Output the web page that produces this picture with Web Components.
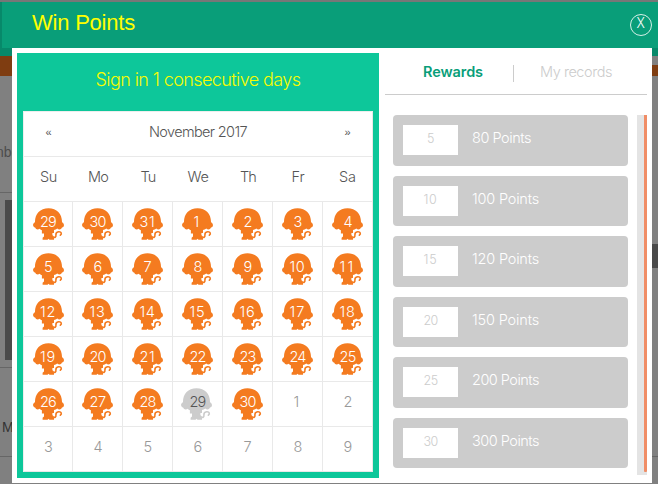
<!DOCTYPE html>
<html lang="en"><head><meta charset="utf-8"><title>Win Points</title>
<style>html,body{margin:0;height:484px;overflow:hidden;background:#808080}body{position:relative;font-family:Inter,"Liberation Sans",sans-serif;font-weight:300}</style></head>
<body><page-backdrop></page-backdrop><points-dialog></points-dialog>
<script>
const define=(name,html,setup)=>customElements.define(name,class extends HTMLElement{
  connectedCallback(){if(this.shadowRoot)return;
    this.attachShadow({mode:'open'}).innerHTML=typeof html==='function'?html(this):html;
    if(setup)setup(this);}
});

// Text whose tracking is tuned so that it spans the width attribute.
define('fit-text',`<style>:host{display:inline-block;white-space:nowrap}</style><span><slot></slot></span>`,el=>{
  const n=el.textContent.length,w=el.shadowRoot.querySelector('span').getBoundingClientRect().width;
  const s=(+el.getAttribute('width')-w)/n;
  el.style.letterSpacing=s.toFixed(3)+'px';
});

define('page-backdrop',`<style>
:host{position:absolute;inset:0;overflow:hidden;background:#808080;font:14px "Liberation Sans",sans-serif;color:#4d4d4d}
i{position:absolute;display:block}span{position:absolute;line-height:16px}
.l{left:0;width:658px;height:1px;background:#666}
</style>
<i style="left:0;top:0;width:658px;height:2px;background:#777"></i>
<i style="left:0;top:2px;width:658px;height:54px;background:#07896a"></i>
<i style="left:0;top:56px;width:12px;height:20px;background:#7f3d11"></i>
<i style="left:652px;top:56px;width:6px;height:9px;background:#808080"></i>
<i style="left:652px;top:65px;width:6px;height:11px;background:#7f3d11"></i>
<i class="l" style="top:192px;width:12px"></i><i style="left:5px;top:200px;width:7px;height:160px;background:#4a4a4a"></i>
<i class="l" style="top:367px;width:12px"></i><i class="l" style="top:456px"></i>
<i style="left:652px;top:244px;width:6px;height:24px;background:#4a4a4a"></i>
<span style="left:-4px;top:144px">nbe</span><span style="left:2px;top:419px;color:#333">M</span>`);

define('close-button',`<style>:host{display:block;width:22px;height:22px;margin-top:12px;box-sizing:border-box;border:1px solid #d5f0e8;border-radius:50%;color:#fff;font:300 14px/16px Inter,sans-serif;text-align:center}fit-text{transform:scaleX(.9)}</style><fit-text width="9">X</fit-text>`);

define('monkey-stamp',`<style>:host{display:block;width:31px;height:32px;color:#f47b20}:host([missed]){color:#ccc}svg{display:block}</style>
<svg width="31" height="32" viewBox="0 0 31 32" fill="currentColor"><path d="M2 14.2C1.8 6 7 .2 15.5.2S29.2 6 29 14.2C31.5 15.3 31.7 19 29 19.6C28.2 21.8 25.8 22 24.3 20.5C23.2 21.4 22.2 21.8 21 22V25H19.4V28.4L21 29.6V31.8H16.5L15.5 30.8L14.6 31.8H9.6V29.8L11 28.4V25.4H8.9V22.3C8.2 22 7.3 21.4 6.7 20.7C4.7 22 2.9 21.4 2.1 19.5C-.6 19 -.6 15.3 2 14.2Z"/><path d="M19.5 28.2C21.8 30.6 23.2 29 22.9 27C22.6 23.2 28.5 22.4 28.3 26L27.3 27.2" fill="none" stroke="currentColor" stroke-width="1.6" stroke-linecap="round"/></svg>`);

define('calendar-day',el=>`<style>
:host{display:grid;place-items:start center;box-sizing:border-box;border-right:1px solid #e9e9e9;border-bottom:1px solid #e9e9e9;height:45px;color:#999;font-size:14.5px}
:host([stamp]){color:#fff}:host([stamp=missed]){color:#555}
monkey-stamp,fit-text{grid-area:1/1}monkey-stamp{margin-top:6px;margin-left:0}:host([stamp=missed]) monkey-stamp{margin-left:-2px}
fit-text{line-height:20px;margin-top:10px;position:relative}
</style>${el.hasAttribute('stamp')?`<monkey-stamp ${el.getAttribute('stamp')==='missed'?'missed':''}></monkey-stamp>`:''}<fit-text width="${el.textContent.length*8}">${el.textContent}</fit-text>`);

define('month-calendar',()=>{
  const days=[29,30,31,...Array.from({length:30},(_,i)=>i+1),...Array.from({length:9},(_,i)=>i+1)];
  return `<style>
:host{display:block;width:350px;height:361px;box-sizing:border-box;border-left:1px solid #eee;border-top:1px solid #eee;background:#fff;color:#555;font-size:14.5px}
.month,.names,.days{display:grid;grid-template-columns:49px repeat(6,50px)}
.month,.names{height:44px;line-height:20px;text-align:center;border-bottom:1px solid #e9e9e9;border-right:1px solid #e9e9e9;grid-template-columns:49px repeat(5,50px) 49px}
.month>*,.names>*{margin-top:10px}.month b{font-weight:300;grid-column:2/7}.arrow{font:11px/20px "Liberation Sans",sans-serif}
</style><div class="month"><span class="arrow">«</span><b><fit-text width="98">November 2017</fit-text></b><span class="arrow">»</span></div>
<div class="names">${[['Su',17],['Mo',20],['Tu',15],['We',21],['Th',16],['Fr',13],['Sa',17]].map(d=>`<span><fit-text width="${d[1]}">${d[0]}</fit-text></span>`).join('')}</div>
<div class="days">${days.map((d,i)=>`<calendar-day ${i<33?`stamp="${i===31?'missed':'done'}"`:''}>${d}</calendar-day>`).join('')}</div>`;
});

define('sign-in-panel',`<style>
:host{display:block;box-sizing:border-box;width:362px;height:425px;padding:0 6px;background:#0dc79a;text-align:center}
h2{margin:0;height:58px;font-weight:300;font-size:18px;line-height:53px;color:#f8fc00}
</style><h2><fit-text width="205">Sign in 1 consecutive days</fit-text></h2><month-calendar></month-calendar>`);

define('reward-card',el=>`<style>
:host{display:flex;align-items:flex-start;box-sizing:border-box;width:235px;height:50.5px;padding:10.3px 10px 0;border-radius:4px;background:#ccc;color:#fff;font-size:14.5px}
.day{width:55px;height:30px;background:#fff;color:#ccc;font-size:12.5px;line-height:27px;text-align:center}
.points{margin-left:14px;line-height:26px}
</style><div class="day"><fit-text width="${el.getAttribute('day').length*7}">${el.getAttribute('day')}</fit-text></div><fit-text class="points" width="${el.getAttribute('points').length*8+43}">${el.getAttribute('points')} Points</fit-text>`);

define('rewards-panel',`<style>
:host{display:block;width:262px;margin-left:6px}
nav{display:flex;box-sizing:border-box;height:42px;border-bottom:1px solid #ccc;padding-left:38px;font-size:14.5px;line-height:20px;color:#ccc}
nav fit-text{margin-top:9px}.on{color:#099e79;font-weight:600}hr{flex:none;width:1px;height:17px;margin:12px 26px 0 30px;border:0;background:#ccc}
.body{display:flex;justify-content:space-between;padding:20px 0 0 8px}
.list{display:flex;flex-direction:column;gap:10px}
.track{width:10px;height:360px;background:#e4e4e4}.thumb{width:3px;height:357px;margin-left:auto;background:#f08d66;border-radius:0 0 1px 1px}
</style><nav><fit-text class="on" width="60">Rewards</fit-text><hr><fit-text width="72">My records</fit-text></nav>
<div class="body"><div class="list">${[[5,80],[10,100],[15,120],[20,150],[25,200],[30,300]].map(r=>`<reward-card day="${r[0]}" points="${r[1]}"></reward-card>`).join('')}</div><div class="track"><div class="thumb"></div></div></div>`);

define('points-dialog',`<style>
:host{display:block;position:absolute;left:2px;top:2px;width:656px}
header{display:flex;justify-content:space-between;height:46px;box-sizing:border-box;padding:0 6px 0 30px;background:#099e79;color:#ff0;font:400 22px/41px "Liberation Sans",sans-serif}
main{display:flex;box-sizing:border-box;width:640px;height:435px;margin-left:10px;padding:5px;background:#fff}
</style><header><fit-text width="103">Win Points</fit-text><close-button></close-button></header><main><sign-in-panel></sign-in-panel><rewards-panel></rewards-panel></main>`);
</script></body></html>
